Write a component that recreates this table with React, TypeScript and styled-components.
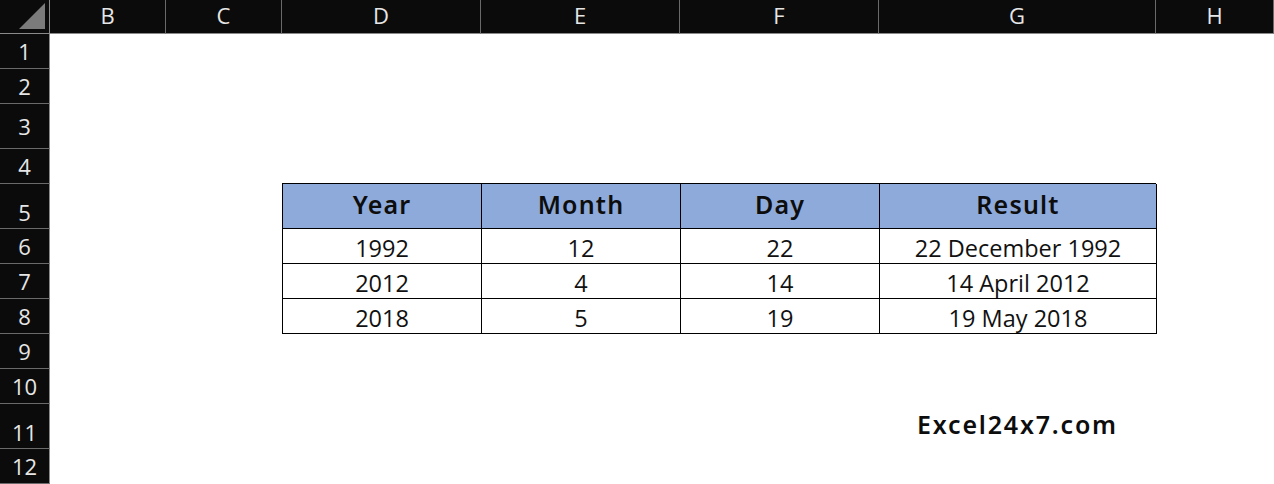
import React from "react";
import styled, { createGlobalStyle } from "styled-components";

const GlobalStyle = createGlobalStyle`
  html, body { margin: 0; padding: 0; background: #ffffff; }
  body { width: 1274px; height: 484px; overflow: hidden; }
  * { box-sizing: border-box; }
`;

const COLS = [50, 116, 116, 199, 199, 199, 277, 118];
const ROWS = [34, 35, 35, 45, 35, 45, 35, 35, 35, 35, 35, 45, 35];

const Sheet = styled.div`
  display: grid;
  grid-template-columns: ${COLS.map((c) => c + "px").join(" ")};
  grid-template-rows: ${ROWS.map((r) => r + "px").join(" ")};
  width: 1274px;
  height: 484px;
  background: #ffffff;
  font-family: "Open Sans", "Noto Sans", sans-serif;
`;

const Corner = styled.div`
  grid-column: 1;
  grid-row: 1;
  background: #0b0b0b;
  border-right: 1px solid #8a8a8a;
  border-bottom: 1px solid #8a8a8a;
  display: flex;
  justify-content: flex-end;
  align-items: flex-end;
  padding: 0 4px 4px 0;
`;

const Triangle = styled.div`
  width: 0;
  height: 0;
  border-left: 26px solid transparent;
  border-bottom: 26px solid #7b7b7b;
`;

const ColHead = styled.div<{ $col: number }>`
  grid-column: ${(p) => p.$col};
  grid-row: 1;
  background: #0b0b0b;
  color: #e6e6e6;
  border-right: 1px solid #6a6a6a;
  border-bottom: 1px solid #8a8a8a;
  display: flex;
  align-items: center;
  justify-content: center;
  font-size: 22px;
  padding-bottom: 3px;
`;

const RowHead = styled.div<{ $row: number; $drop?: boolean }>`
  grid-column: 1;
  grid-row: ${(p) => p.$row};
  background: #0b0b0b;
  color: #e6e6e6;
  border-right: 1px solid #8a8a8a;
  border-bottom: 1px solid #6a6a6a;
  display: flex;
  align-items: center;
  justify-content: center;
  font-size: 22px;
  line-height: 1;
  padding-top: ${(p) => (p.$drop ? "11px" : "0")};
`;

const Table = styled.div`
  grid-column: 4 / 8;
  grid-row: 6 / 10;
  display: grid;
  grid-template-columns: 199px 199px 199px 277px;
  grid-template-rows: 45px 35px 35px 35px;
  border-left: 1px solid #000;
  border-top: 1px solid #000;
  margin-top: -1px;
`;

const HeadCell = styled.div`
  background: #8eaadb;
  border-right: 1px solid #000;
  border-bottom: 1px solid #000;
  display: flex;
  align-items: center;
  justify-content: center;
  font-family: "Noto Sans", "Open Sans", sans-serif;
  font-weight: 600;
  font-size: 25px;
  letter-spacing: 1.2px;
  color: #0d0d0d;
  padding-bottom: 4px;
`;

const Cell = styled.div`
  background: #ffffff;
  border-right: 1px solid #000;
  border-bottom: 1px solid #000;
  display: flex;
  align-items: center;
  justify-content: center;
  font-family: "Open Sans", "Noto Sans", sans-serif;
  font-size: 23.5px;
  color: #111;
  padding-top: 3px;
`;

const Brand = styled.div`
  grid-column: 7;
  grid-row: 12;
  display: flex;
  align-items: center;
  justify-content: center;
  font-family: "Noto Sans", "Open Sans", sans-serif;
  font-weight: 600;
  font-size: 25px;
  letter-spacing: 1.8px;
  color: #0d0d0d;
  padding-bottom: 6px;
`;

const letters = ["B", "C", "D", "E", "F", "G", "H"];
const header = ["Year", "Month", "Day", "Result"];
const data = [
  ["1992", "12", "22", "22 December 1992"],
  ["2012", "4", "14", "14 April 2012"],
  ["2018", "5", "19", "19 May 2018"],
];

export default function App() {
  return (
    <>
      <GlobalStyle />
      <Sheet>
        <Corner>
          <Triangle />
        </Corner>
        {letters.map((l, i) => (
          <ColHead key={l} $col={i + 2}>
            {l}
          </ColHead>
        ))}
        {Array.from({ length: 12 }, (_, i) => (
          <RowHead key={i} $row={i + 2} $drop={i + 1 === 5 || i + 1 === 11}>
            {i + 1}
          </RowHead>
        ))}
        <Table>
          {header.map((h) => (
            <HeadCell key={h}>{h}</HeadCell>
          ))}
          {data.map((row, r) =>
            row.map((v, c) => <Cell key={`${r}-${c}`}>{v}</Cell>)
          )}
        </Table>
        <Brand>Excel24x7.com</Brand>
      </Sheet>
    </>
  );
}
